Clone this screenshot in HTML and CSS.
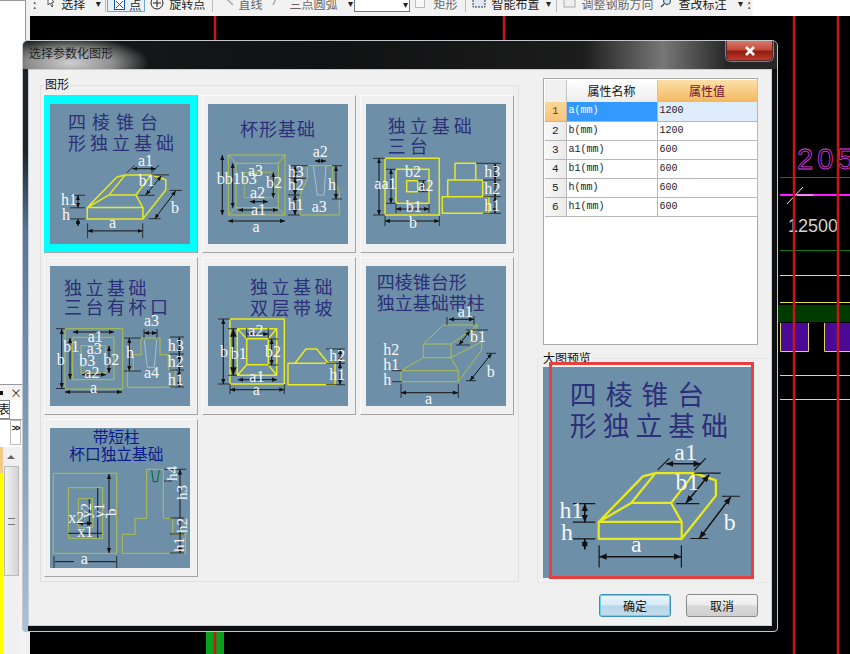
FILE: index.html
```html
<!DOCTYPE html>
<html lang="zh">
<head>
<meta charset="utf-8">
<title>选择参数化图形</title>
<link rel="stylesheet" href="styles.css">
</head>
<body>
<svg class="defs" width="0" height="0" aria-hidden="true">
  <defs>
    <marker id="ar" viewBox="0 0 6 6" refX="6" refY="3" markerWidth="5" markerHeight="5" orient="auto-start-reverse"><path d="M0 0.5L6 3L0 5.5z" fill="#111"/></marker>
  </defs>
</svg>
<div class="app">
  <aside class="sidebar">
    <div class="side-top"></div>
    <div class="side-tabhead"><span class="side-dot"></span><span class="side-x">×</span></div>
    <div class="side-tab"><span>表</span></div>
    <div class="side-more"><span class="more-btn">&gt;&gt;</span></div>
    <div class="side-list">
      <div class="side-yellow"></div>
      <div class="side-scroll"><span class="sc-up"></span><span class="sc-thumb"><span class="sc-grip"></span></span></div>
    </div>
  </aside>
  <main class="main">
    <div class="toolbar">
      <div class="tb-row">
        <span class="tb-t m3">:</span>
        <svg class="ic m10" width="10" height="12" viewBox="0 0 10 12"><path d="M2 0L2 9L4 7L6 11L7 10L5.500 6.500L8 6z" fill="#fff" stroke="#333" stroke-width=".8"/></svg>
        <span class="tb-t m5">选择</span>
        <span class="tb-c m9">▾</span>
        <span class="tb-s m3"></span>
        <span class="tb-on m1">
          <svg class="ic" width="11" height="11" viewBox="0 0 11 11"><rect x=".5" y=".5" width="10" height="10" fill="#fff" stroke="#1b4fa8"/><path d="M2 2L9 9M9 2L2 9" stroke="#c02020"/></svg>
          <span class="tb-t">点</span>
        </span>
        <svg class="ic m5" width="14" height="14" viewBox="0 0 14 14"><circle cx="7" cy="7" r="6" fill="none" stroke="#222"/><path d="M7 3V11M3 7H11" stroke="#222"/></svg>
        <span class="tb-t m5">旋转点</span>
        <span class="tb-s m7"></span>
        <svg class="ic m11" width="10" height="10" viewBox="0 0 10 10"><path d="M1 1L9 9" stroke="#aaa" stroke-width="1.500"/></svg>
        <span class="tb-t off m4">直线</span>
        <svg class="ic m10" width="6" height="10" viewBox="0 0 6 10"><path d="M5 0L1 9" stroke="#aaa" stroke-width="1.500"/></svg>
        <span class="tb-t off m11">三点圆弧</span>
        <span class="tb-c m9">▾</span>
        <span class="tb-combo"><span class="tb-c">▾</span></span>
        <span class="tb-box m5"></span>
        <span class="tb-t off m8">矩形</span>
        <span class="tb-s m8"></span>
        <svg class="ic m6" width="14" height="12" viewBox="0 0 14 12"><rect x="1" y="1" width="12" height="10" fill="#dfe8f2" stroke="#333" stroke-dasharray="2 1"/></svg>
        <span class="tb-t m5">智能布置</span>
        <span class="tb-c m5">▾</span>
        <span class="tb-s m4"></span>
        <svg class="ic m6" width="13" height="12" viewBox="0 0 13 12"><rect x="1" y="1" width="11" height="10" fill="#eee" stroke="#aaa"/></svg>
        <span class="tb-t off m5">调整钢筋方向</span>
        <svg class="ic m6" width="13" height="12" viewBox="0 0 13 12"><circle cx="8" cy="5" r="3.500" fill="#cfe4f6" stroke="#345"/><path d="M5 8L2 11" stroke="#345" stroke-width="1.500"/></svg>
        <span class="tb-t m6">查改标注</span>
        <span class="tb-c m10">▾</span>
        <span class="tb-t m3">:</span>
      </div>
    </div>
    <div class="canvas">
      <svg class="cad" width="820" height="638" viewBox="30 16 820 638">
        <rect x="30" y="305" width="820" height="17" fill="#003c00"/>
        <rect x="780" y="323" width="28" height="28" fill="#4a0a96"/>
        <rect x="824" y="323" width="26" height="28" fill="#4a0a96"/>
        <path d="M780.500 323V351.500H808.500V323M824.500 323V351.500H850" fill="none" stroke="#dada60"/>
        <path d="M780 177.500H850M780 250.500H850" stroke="#0b7a1a"/>
        <path d="M780 275.500H850M780 302.500H850M780 375.500H850M780 399.500H850" stroke="#e0e050"/>
        <path d="M780 195H850" stroke="#ff1cff" stroke-width="2"/>
        <path d="M787 204L803 187M797 195H813" stroke="#eee"/>
        <text class="cad-m" x="797" y="169">2050</text>
        <text class="cad-w" x="788" y="232">12500</text>
        <rect x="206" y="625" width="18" height="30" fill="#0aa01e"/>
        <path d="M215 16V70M215 620V654M504 16V60M794 16V654M838 16V654" stroke="#c81616" stroke-width="2.500"/>
      </svg>
    </div>
  </main>

  <section class="dialog">
    <header class="titlebar">
      <span class="title">选择参数化图形</span>
      <span class="close"><svg width="14" height="10" viewBox="0 0 14 10"><path d="M3 1L11 9M11 1L3 9" stroke="#fff" stroke-width="2.600"/></svg></span>
    </header>
    <div class="client">
      <div class="client-top">
        <div class="group-shapes">
          <span class="legend">图形</span>
          <div class="cells">

            <div class="cell selected">
              <svg class="thumb" width="140" height="140" viewBox="0 0 140 140">
                <text class="ttl" x="18" y="25"><tspan class="wide">四棱锥台</tspan></text>
                <text class="ttl sp4" x="18" y="46">形独立基础</text>
                <path class="y" d="M37.300 103.600H92.900V114.900H37.300zM37.300 103.600L66.900 73.100L75.300 70.900H101.300L115.800 75.800V86L92.900 114.900M37.300 103.600L59.100 90.900H85.800L92.900 103.600M75.300 70.900L59.100 90.900M101.300 70.900L85.800 90.900"/>
                <path class="t" d="M76.900 68.700L84.700 60.900M101.300 69L109.100 60.900M101.300 70.900H119.100M89.100 91.300H104.700M119.800 86.400H131.800M98.700 114.700H110.700M20 91.300H35M20 103.800H35M20 114.900H35M37.600 119.300V134.200M92.700 119.300V134.200"/>
                <g class="d" marker-start="url(#ar)" marker-end="url(#ar)">
                  <path d="M82.400 64.700H105.800"/><path d="M111.300 72L95.800 90.900"/><path d="M125.800 86.900L104.700 114.700"/><path d="M28 91.300V103.800"/><path d="M28 114.900V122"/><path d="M37.600 126.900H92.700"/>
                </g>
                <text class="lb" x="88" y="62">a1</text><text class="lb" x="88.700" y="82">b1</text><text class="lb" x="121" y="109">b</text><text class="lb" x="11" y="101">h1</text><text class="lb" x="12" y="116">h</text><text class="lb" x="59" y="124">a</text>
              </svg>
            </div>

            <div class="cell">
              <svg class="thumb" width="140" height="140" viewBox="0 0 140 140">
                <text class="ttl sp1" x="32" y="32">杯形基础</text>
                <path class="o" d="M20.300 51H77V111H20.300zM28 59.300H70.300V103.700H28zM20.300 51L28 59.300M77 51L70.300 59.300M20.300 111L28 103.700M77 111L70.300 103.700"/>
                <path class="o dash" d="M36.300 68.300H66V93.700H36.300z"/>
                <path class="o" d="M99.300 61.700V74.300L92 91V111H131.300V87.700L124.700 74.300V61.700z"/>
                <path class="w" d="M105.300 61.700L109.300 91H116L118 61.700"/>
                <path class="t" d="M80 61.700H100M80 74.300H98M80 91H92M80 111H92M124 61.700H134M124 95H134"/>
                <g class="d" marker-start="url(#ar)" marker-end="url(#ar)">
                  <path d="M14.300 51V111"/><path d="M24.700 59.300V103.700"/><path d="M65.300 68.300V93.700"/><path d="M20.300 117H77"/><path d="M30 106H70"/><path d="M42 97.700H60"/><path d="M107 57H118"/><path d="M87 62V74"/><path d="M87 74V91"/><path d="M87 91V111"/><path d="M128 62V95"/>
                </g>
                <text class="lb" x="8.700" y="80">bb1b3</text><text class="lb" x="40" y="72">a3</text><text class="lb" x="58" y="84">b2</text><text class="lb" x="42" y="94">a2</text><text class="lb" x="43" y="111">a1</text><text class="lb" x="44.600" y="128">a</text><text class="lb" x="104.700" y="52.600">a2</text><text class="lb" x="79.700" y="72.600">h3</text><text class="lb" x="79.700" y="86">h2</text><text class="lb" x="79.700" y="106">h1</text><text class="lb" x="120" y="86">h</text><text class="lb" x="103.700" y="107.700">a3</text>
              </svg>
            </div>

            <div class="cell">
              <svg class="thumb" width="140" height="140" viewBox="0 0 140 140">
                <text class="ttl sp4" x="21.700" y="29">独立基础</text>
                <text class="ttl sp4" x="21.700" y="49">三台</text>
                <path class="y" d="M19 54.300H73.300V111H19zM30 65.300H63V99.300H30zM40.700 76.700H51.700V87.700H40.700zM89 59.300H109.700V76H89zM81.700 76H116.700V92.700H81.700zM76.300 92.700H123V109.300H76.300z"/>
                <path class="t" d="M7 54.300H19M7 111H19M20 65.300H30M20 99.300H30M52 76.700H62M52 87.700H62M19 112V122M73.300 112V122M30 100V109M63 100V109M110 59.300H135M117 76H135M117 92.700H135M117 109.300H135"/>
                <g class="d" marker-start="url(#ar)" marker-end="url(#ar)">
                  <path d="M13 54.300V111"/><path d="M25 65.300V99.300"/><path d="M57.300 76.700V87.700"/><path d="M30 105H63"/><path d="M19 117H73.300"/><path d="M129 59.300V76"/><path d="M129 76V92.700"/><path d="M129 92.700V109.300"/>
                </g>
                <text class="lb" x="8.300" y="85">aa1</text><text class="lb" x="39" y="73.300">b2</text><text class="lb" x="52.300" y="86.700">a2</text><text class="lb" x="39.700" y="107.700">b1</text><text class="lb" x="43" y="124.300">b</text><text class="lb" x="118.300" y="73">h3</text><text class="lb" x="118.300" y="90">h2</text><text class="lb" x="118.300" y="106.700">h1</text>
              </svg>
            </div>

            <div class="cell">
              <svg class="thumb" width="140" height="140" viewBox="0 0 140 140">
                <text class="ttl sp3" x="14" y="28.700">独立基础</text>
                <text class="ttl sp3" x="14" y="48">三台有杯口</text>
                <path class="o" d="M15 62.700H72.700V123H15zM22.700 71.300H64V113.700H22.700zM31 79.700H55.700V107H31zM91 72H110V88.700H118.300V103.700H125V121.300H77.300V103.700H83.300V88.700H91z"/>
                <path class="w" d="M94.300 73.700L97.300 101.300H104.300L106.700 73.700"/>
                <path class="t" d="M6 62.700H15M6 122.500H15M74 72H91M74 105H91M94 63V72M107 63V72M120 71H134M120 88H134M120 104H134M120 121H134"/>
                <g class="d" marker-start="url(#ar)" marker-end="url(#ar)">
                  <path d="M11.700 63V122"/><path d="M20 72V113"/><path d="M59 80V107"/><path d="M15 126H72"/><path d="M23 66H64"/><path d="M32 108.700H56"/><path d="M94 67H107"/><path d="M79.300 72V105"/><path d="M129.300 71V88"/><path d="M129.300 88V104"/><path d="M129.300 104V121"/>
                </g>
                <text class="lb" x="6.700" y="99.300">b</text><text class="lb" x="13.300" y="86">b1</text><text class="lb" x="37.700" y="76">a1</text><text class="lb" x="36.700" y="88">a3</text><text class="lb" x="29.300" y="100">b3</text><text class="lb" x="53.300" y="99.300">b2</text><text class="lb" x="34.300" y="112">a2</text><text class="lb" x="40" y="127">a</text><text class="lb" x="94" y="60">a3</text><text class="lb" x="76" y="92">h</text><text class="lb" x="94" y="112">a4</text><text class="lb" x="117.700" y="85">h3</text><text class="lb" x="117.700" y="101">h2</text><text class="lb" x="117.700" y="118.700">h1</text>
              </svg>
            </div>

            <div class="cell">
              <svg class="thumb" width="140" height="140" viewBox="0 0 140 140">
                <text class="ttl sp3" x="42" y="28">独立基础</text>
                <text class="ttl sp3" x="42" y="48.700">双层带坡</text>
                <path class="y" d="M22 53H76.300V118H22zM29.300 62.700H68.700V109.300H29.300zM38.700 72.700H60.300V98.700H38.700zM29.300 62.700L38.700 72.700M68.700 62.700L60.300 72.700M29.300 109.300L38.700 98.700M68.700 109.300L60.300 98.700M80 97.300H127V118.700H80zM87 97.300L98 83H108.700L120.300 97.300"/>
                <path class="t" d="M10 53H22M10 118H22M20 62.700H29M20 109.300H29M60 73H70M60 99H70M38.700 62V72M60.300 62V72M22 118V128M76.300 118V128M118 83H137M118 97.300H137M118 118.700H137"/>
                <g class="d" marker-start="url(#ar)" marker-end="url(#ar)">
                  <path d="M15.300 53V118"/><path class="thick" d="M25.300 62.700V109.300"/><path d="M63.700 73V99"/><path d="M38.700 68H60.300"/><path d="M30 113.700H69"/><path d="M22 123.700H76.300"/><path d="M132 83V97.300"/><path d="M132 97.300V118.700"/>
                </g>
                <text class="lb" x="12" y="91">b</text><text class="lb" x="22.700" y="93">b1</text><text class="lb" x="40.300" y="69.700">a2</text><text class="lb" x="57" y="91">b2</text><text class="lb" x="41.300" y="116">a1</text><text class="lb" x="44.700" y="129.300">a</text><text class="lb" x="121.300" y="95.300">h2</text><text class="lb" x="121.300" y="113.700">h1</text>
              </svg>
            </div>

            <div class="cell">
              <svg class="thumb" width="140" height="140" viewBox="0 0 140 140">
                <text class="ttl" x="10.700" y="23.300">四棱锥台形</text>
                <text class="ttl" x="10.700" y="44">独立基础带柱</text>
                <path class="o" d="M35 104.700H92.300V115.700H35zM57.300 78H85V91.700H57.300zM57.300 78L77.300 59H111.700L85 78M35 104.700L57.300 91.700M85 91.700L92.300 104.700M85 91.700L115.700 75.700V84L92.300 115.700M111.700 59L104 76.500"/>
                <path class="t" d="M81 59V51M108 59V50M100 64H122M90 79H104M120 87.300H130M100 114.700H110M26 104.700H36M26 115.700H36M35 118V132M92.300 118V132"/>
                <g class="d" marker-start="url(#ar)" marker-end="url(#ar)">
                  <path d="M83 53.300H108"/><path d="M104 64.700L93 79"/><path d="M125.700 87.300L104 114.700"/><path d="M35 126.700H92"/>
                </g>
                <text class="lb" x="91.700" y="50.700">a1</text><text class="lb" x="104" y="75.700">b1</text><text class="lb" x="120.700" y="110.700">b</text><text class="lb" x="59" y="138">a</text><text class="lb" x="17.300" y="89">h2</text><text class="lb" x="17.300" y="104">h1</text><text class="lb" x="17.300" y="119">h</text>
              </svg>
            </div>

            <div class="cell">
              <svg class="thumb" width="140" height="140" viewBox="0 0 140 140">
                <text class="ttl2" x="42.700" y="15">带短柱</text>
                <text class="ttl2" x="19.300" y="32">杯口独立基础</text>
                <path class="o" d="M3.300 45.300H66.700V125.300H3.300zM18.300 59.700H52.700V110.300H18.300zM28.300 70.700H42.700V99.700H28.300zM96.700 41.300V90.300H85V106.300H72.300V125.300H135.700V106.300H122.700V90.300H113.300V41.300z"/>
                <path class="g" d="M101.700 42L103.300 53.700H107.300L109.300 42"/>
                <path class="t" d="M4 128V140M66.700 128V140M114 41.300H136M114 53H122M120 90H134M120 106H134M120 125H134"/>
                <path class="d" d="M5 133.700H24M38 133.700H66M47.700 60V110M39.300 71V100M18 105.300H52"/>
                <g class="d" marker-start="url(#ar)" marker-end="url(#ar)">
                  <path d="M59 46V125"/><path d="M130 41.500V125"/><path d="M28 95.300H42"/>
                </g>
                <text class="lb" x="18.300" y="94.700">x2</text><text class="lb" x="27.300" y="109.300">x1</text><text class="lb" x="30.700" y="136">a</text>
                <g class="lb-r">
                  <text transform="translate(41 90) rotate(-90)">y2</text>
                  <text transform="translate(54 90) rotate(-90)">y1</text>
                  <text transform="translate(66 88) rotate(-90)">b</text>
                  <text transform="translate(127 53) rotate(-90)">h4</text>
                  <text transform="translate(137 72) rotate(-90)">h3</text>
                  <text transform="translate(137 105) rotate(-90)">h2</text>
                  <text transform="translate(134 124) rotate(-90)">h1</text>
                </g>
              </svg>
            </div>

          </div>
        </div>

        <div class="col-right">
          <div class="props">
            <table class="grid">
              <colgroup><col class="c-n"><col class="c-k"><col class="c-v"></colgroup>
              <thead><tr><th class="h-n"></th><th class="h-k">属性名称</th><th class="h-v">属性值</th></tr></thead>
              <tbody>
                <tr class="cur"><td class="n">1</td><td class="k">a(mm)</td><td class="v">1200</td></tr>
                <tr><td class="n">2</td><td class="k">b(mm)</td><td class="v">1200</td></tr>
                <tr><td class="n">3</td><td class="k">a1(mm)</td><td class="v">600</td></tr>
                <tr><td class="n">4</td><td class="k">b1(mm)</td><td class="v">600</td></tr>
                <tr><td class="n">5</td><td class="k">h(mm)</td><td class="v">600</td></tr>
                <tr><td class="n">6</td><td class="k">h1(mm)</td><td class="v">600</td></tr>
              </tbody>
            </table>
          </div>
          <div class="group-preview">
            <span class="legend legend-p">大图预览</span>
            <div class="preview">
              <svg class="thumb" width="209" height="211" viewBox="0 0 140 141">
                <text class="ttl" x="18" y="25"><tspan class="wide">四棱锥台</tspan></text>
                <text class="ttl sp4" x="18" y="46">形独立基础</text>
                <path class="y" d="M37.300 103.600H92.900V114.900H37.300zM37.300 103.600L66.900 73.100L75.300 70.900H101.300L115.800 75.800V86L92.900 114.900M37.300 103.600L59.100 90.900H85.800L92.900 103.600M75.300 70.900L59.100 90.900M101.300 70.900L85.800 90.900"/>
                <path class="t" d="M76.900 68.700L84.700 60.900M101.300 69L109.100 60.900M101.300 70.900H119.100M89.100 91.300H104.700M119.800 86.400H131.800M98.700 114.700H110.700M20 91.300H35M20 103.800H35M20 114.900H35M37.600 119.300V134.200M92.700 119.300V134.200"/>
                <g class="d" marker-start="url(#ar)" marker-end="url(#ar)">
                  <path d="M82.400 64.700H105.800"/><path d="M111.300 72L95.800 90.900"/><path d="M125.800 86.900L104.700 114.700"/><path d="M28 91.300V103.800"/><path d="M28 114.900V122"/><path d="M37.600 126.900H92.700"/>
                </g>
                <text class="lb" x="88" y="62">a1</text><text class="lb" x="88.700" y="82">b1</text><text class="lb" x="121" y="109">b</text><text class="lb" x="11" y="101">h1</text><text class="lb" x="12" y="116">h</text><text class="lb" x="59" y="124">a</text>
              </svg>
              <span class="red-frame"></span>
            </div>
          </div>
        </div>
      </div>
      <footer class="buttons">
        <button class="btn primary" type="button">确定</button>
        <button class="btn" type="button">取消</button>
      </footer>
    </div>
  </section>
</div>
</body>
</html>
```

FILE: styles.css
```css
* { box-sizing: border-box; }
html, body { margin: 0; padding: 0; }
body { width: 850px; height: 654px; overflow: hidden; background: #000; font-family: "Noto Sans CJK SC", "Liberation Sans", sans-serif; font-size: 12px; color: #111; }
.defs { position: absolute; }
.app { position: relative; width: 850px; height: 654px; display: flex; overflow: hidden; }

/* left docking strip */
.sidebar { width: 30px; height: 654px; display: flex; flex-direction: column; background: #fff; border-right: 4px solid #f0f0f0; flex: none; }
.side-top { height: 384px; border-top: 1px solid #999; border-right: 1px solid #999; }
.side-tabhead { height: 16px; display: flex; align-items: center; justify-content: space-between; background: #f4f4f4; border-top: 1px solid #999; overflow: hidden; }
.side-dot { width: 3px; height: 4px; background: #111; }
.side-x { font-size: 12px; line-height: 12px; color: #333; margin-right: 4px; }
.side-tab { height: 20px; font-size: 12px; line-height: 18px; background: #fff; border-bottom: 1px solid #999; overflow: hidden; }
.side-tab span { display: block; width: 12px; height: 19px; border: 1px solid #888; border-left: 0; overflow: hidden; line-height: 16px; margin-left: -2px; }
.side-more { height: 27px; display: flex; justify-content: flex-end; padding-right: 5px; background: #fff; }
.more-btn { width: 11px; height: 25px; border: 1px solid #bbb; font-family: "Liberation Sans", sans-serif; font-size: 9px; font-weight: 700; line-height: 14px; text-align: center; overflow: hidden; letter-spacing: -1.500px; white-space: nowrap; }
.side-list { flex: 1; display: flex; background: #f2f2f2; }
.side-yellow { width: 3px; background: linear-gradient(180deg, #f6c987 0, #f6c987 26px, #ffff00 27px); }
.side-scroll { width: 16px; display: flex; flex-direction: column; align-items: center; padding-top: 8px; background: #f0f0f0; }
.sc-up { width: 0; height: 0; border: 4px solid transparent; border-bottom-color: #666; border-top: 0; }
.sc-thumb { width: 15px; height: 110px; margin-top: 7px; border: 1px solid #bbb; background: linear-gradient(90deg, #f2f2f2, #d4d4d4); display: flex; align-items: center; justify-content: center; }
.sc-grip { width: 7px; height: 7px; border-top: 1px solid #777; border-bottom: 1px solid #777; }

/* main area */
.main { flex: 1; display: flex; flex-direction: column; min-width: 0; }
.toolbar { height: 16px; overflow: hidden; background: linear-gradient(90deg, #f2f2f2 0, #f2f2f2 722px, #fff 723px); flex: none; }
.tb-row { display: flex; align-items: flex-start; height: 16px; margin-top: -4px; white-space: nowrap; }
.tb-t { line-height: 16px; color: #222; flex: none; }
.tb-t.off { color: #666; }
.tb-c { line-height: 16px; font-size: 10px; color: #222; flex: none; width: 8px; text-align: center; font-family: "DejaVu Sans", sans-serif; }
.tb-s { width: 1px; height: 16px; background: #bbb; flex: none; }
.tb-on { width: 38px; height: 16px; border: 1px solid #6fa6d8; background: #e8f2fb; display: flex; align-items: flex-start; justify-content: space-between; padding: 0 3px 0 6px; flex: none; }
.tb-on .ic { margin-top: 2px; }
.tb-combo { width: 56px; height: 16px; border: 1px solid #777; background: #fff; display: flex; justify-content: flex-end; flex: none; }
.tb-box { width: 10px; height: 12px; border: 1px solid #bbb; background: #f8f8f8; flex: none; }
.ic { flex: none; }
.m1 { margin-left: 1px; } .m3 { margin-left: 3px; } .m4 { margin-left: 4px; } .m5 { margin-left: 5px; } .m6 { margin-left: 6px; } .m7 { margin-left: 7px; } .m8 { margin-left: 8px; } .m9 { margin-left: 9px; } .m10 { margin-left: 10px; } .m11 { margin-left: 11px; }
.canvas { flex: 1; position: relative; background: #000; overflow: hidden; }
.cad { position: absolute; left: 0; top: 0; display: block; }
.cad-m { font-family: "Liberation Sans", sans-serif; font-size: 29px; letter-spacing: 4px; fill: none; stroke: #e23ce2; stroke-width: .8px; }
.cad-w { font-family: "Liberation Sans", sans-serif; font-size: 18px; fill: #d4d4d4; }

/* dialog window */
.dialog { position: absolute; left: 22px; top: 40px; width: 756px; height: 592px; display: flex; flex-direction: column; padding: 0 5px 5px; border: 1px solid #c4c8cc; border-radius: 6px 6px 4px 4px; background: linear-gradient(180deg, #1c2228 0, #1c2228 110px, #557799 190px, #a9c2da 100%) no-repeat 0 0 / 5px 100%, #0c0e10; overflow: hidden; }
.titlebar { height: 28px; margin: 0 -5px; padding: 0 5px; display: flex; align-items: flex-start; justify-content: space-between; flex: none; background: radial-gradient(ellipse 78px 26px at 48px 22px, rgba(215,215,215,.95) 0, rgba(170,170,170,.8) 55%, rgba(80,80,80,0) 100%), linear-gradient(90deg, rgba(35,35,35,.55) 0, rgba(20,20,20,.5) 300px, rgba(30,30,30,.9) 560px, rgba(125,125,125,.95) 640px, rgba(40,40,40,.95) 704px); }
.title { font-size: 12px; line-height: 16px; margin: 4px 0 0 1px; color: #222; }
.close { width: 47px; height: 20px; margin-right: -1px; border: 1px solid #5a2a2a; border-top: 0; border-radius: 0 0 5px 5px; background: linear-gradient(180deg, #d77a6c 0, #c44a3a 45%, #8f1c12 55%, #c23a2a 100%); display: flex; align-items: center; justify-content: center; box-shadow: 0 0 0 1px rgba(220,220,220,.5); }
.close svg { display: block; }
.client { flex: 1; display: flex; flex-direction: column; background: #f0f0f0; border: 1px solid #c8ced4; min-height: 0; }
.client-top { height: 514px; display: flex; flex: none; }

.group-shapes { width: 479px; height: 497px; margin: 15px 0 0 11px; border: 1px solid #e0e0e0; position: relative; padding: 9px 0 0 3px; flex: none; }
.legend { position: absolute; left: 3px; top: -10px; line-height: 15px; padding: 0 1px; font-size: 12px; color: #111; background: #f0f0f0; }
.cells { display: grid; grid-template-columns: repeat(3, 154px); grid-auto-rows: 158px; column-gap: 4px; row-gap: 4px; }
.cell { padding: 9px 0 0 6px; border: 1px solid; border-color: #fafafa #a4a4a4 #a4a4a4 #fafafa; }
.cell.selected { background: #00ffff; border-color: #00ffff; border-bottom-color: #a4a4a4; border-right-color: #a4a4a4; }
.cell .thumb { margin-left: -1px; margin-top: -1px; }
.thumb { display: block; background: #6e8fa8; }

.ttl { font-size: 18px; fill: #2c3079; font-weight: 400; }
.ttl2 { font-size: 15.700px; fill: #0c1a8a; font-weight: 400; }
.wide { letter-spacing: 6px; }
.sp1 { letter-spacing: 1px; }
.sp3 { letter-spacing: 3.500px; }
.sp4 { letter-spacing: 4px; }
.y { fill: none; stroke: #e9e91f; stroke-width: 1.500px; stroke-linejoin: round; }
.o { fill: none; stroke: #aebf4e; stroke-width: 1px; }
.dash { stroke-dasharray: 3 1; }
.w { fill: none; stroke: #b9ccd6; stroke-width: .8px; }
.g { fill: none; stroke: #12703f; stroke-width: 1.200px; }
.t { fill: none; stroke: #181818; stroke-width: .8px; }
.d { fill: none; stroke: #141414; stroke-width: 1px; }
.thick { stroke-width: 1.600px; }
.lb { font-family: "Liberation Serif", serif; font-size: 16px; fill: #f6f6f6; }
.lb-r { font-family: "Liberation Serif", serif; font-size: 15px; fill: #f6f6f6; }

/* right column */
.col-right { width: 234px; margin-left: 18px; display: flex; flex-direction: column; flex: none; }
.props { width: 215px; height: 267px; margin: 8px 0 0 6px; background: #fff; border: 1px solid #aaa; padding: 1px; flex: none; }
.grid { width: 212px; table-layout: fixed; border-collapse: collapse; font-size: 12px; }
.c-n { width: 21px; } .c-k { width: 91px; } .c-v { width: 100px; }
.grid th { height: 22px; padding: 0; font-weight: 400; font-size: 12px; line-height: 14px; border-right: 1px solid #c4c4c4; }
.h-n { background: #f0f0f0; }
.h-k { background: linear-gradient(180deg, #fff, #ececec); color: #111; }
.h-v { background: linear-gradient(180deg, #fce0a8, #f2b75f); color: #70102e; }
.grid td { height: 19px; padding: 0 0 0 2px; border: 1px solid #b8b8b8; border-top: 0; border-left: 0; font-family: "Liberation Mono", monospace; font-size: 10px; line-height: 14px; color: #222; overflow: hidden; white-space: nowrap; }
.grid td.n { padding: 0; text-align: center; font-size: 11px; background: linear-gradient(90deg, #f8f8f8, #eaeaea); }
.grid .cur .n { background: linear-gradient(180deg, #fbd698, #f7c67c); color: #7a3a00; }
.grid .cur .k { background: #3399ff; color: #fff; }
.grid .cur .v { background: #deecfb; }

.group-preview { position: relative; width: 234px; height: 225px; margin-top: 13px; border: 1px solid #e6e6e6; border-right: 0; padding: 8px 0 0 5px; flex: none; }
.legend-p { left: 4px; top: -9px; }
.preview { position: relative; width: 209px; height: 211px; }
.red-frame { position: absolute; left: 6px; top: -5px; width: 205px; height: 217px; border: 3.500px solid #e64040; box-shadow: inset 0 2px #f4f4f4; }

.buttons { display: flex; justify-content: flex-end; gap: 15px; padding: 10px 13px 0 0; }
.btn { width: 72px; height: 23px; padding: 0; font: 12px/14px "Noto Sans CJK SC", sans-serif; color: #111; border: 1px solid #8a8a8a; border-radius: 3px; background: linear-gradient(180deg, #f6f6f6 0, #ececec 48%, #d8d8d8 52%, #cfcfcf 100%); }
.btn.primary { border-color: #3c8fb8; background: linear-gradient(180deg, #eaf5fb 0, #d4e8f4 48%, #b8d6e8 52%, #c2dcec 100%); box-shadow: inset 0 0 0 1px #6fd0ee; }
```
